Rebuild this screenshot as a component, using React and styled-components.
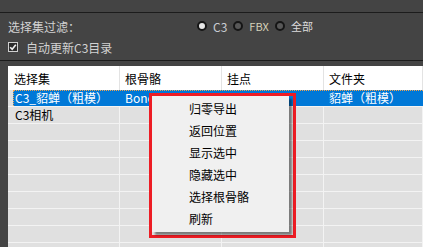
import React from "react";
import styled, { createGlobalStyle } from "styled-components";

const Global = createGlobalStyle`
  html, body { margin: 0; padding: 0; background: #444444; }
  body { font-family: "Noto Sans CJK SC", "Noto Sans", sans-serif; }
`;

const Frame = styled.div`
  position: relative;
  width: 423px;
  height: 247px;
  overflow: hidden;
  background: #444444;
`;

const TopStrip = styled.div`
  height: 12px;
  border-bottom: 1px solid #1c1c1c;
`;

const FilterPanel = styled.div`
  display: flex;
  flex-direction: column;
  gap: 3px;
  padding: 4px 0 4px 8px;
  border-bottom: 1px solid #1c1c1c;
  color: #d2d2d2;
  font-size: 12px;
`;

const Line = styled.div`
  display: flex;
  align-items: center;
  height: 18px;
`;

const FilterLabel = styled.span`
  width: 189px;
`;

const RadioGroup = styled.div`
  display: flex;
  align-items: center;
  gap: 6px;
`;

const Radio = styled.span`
  box-sizing: border-box;
  width: 10px;
  height: 10px;
  border-radius: 50%;
  border: 2px solid #151515;
  background: ${(p) => (p.$on ? "#e6e6e6" : "#585858")};
`;

const RadioText = styled.span`
  color: ${(p) => p.$tint || "#c9ccd2"};
  font-size: ${(p) => p.$size || "12px"};
`;

const CheckBox = styled.span`
  display: flex;
  width: 10px;
  height: 10px;
  margin-right: 8px;
`;

const Table = styled.div`
  margin: 5px 0 0 8px;
  font-size: 12px;
  color: #000;
`;

const Cols = styled.div`
  display: grid;
  grid-template-columns: 112px 102px 102px 1fr;
`;

const HeaderRow = styled(Cols)`
  height: 24px;
  background: #ffffff;
`;

const HeaderCell = styled.div`
  display: flex;
  align-items: center;
  padding-left: ${(p) => (p.$first ? "6px" : "5px")};
  border-right: 1px solid #e3e3e3;
`;

const Row = styled(Cols)`
  position: relative;
  height: 16px;
  border-bottom: 1px solid #f3f3f3;
  background: #e0e0e0;
  color: ${(p) => (p.$selected ? "#ffffff" : "#000")};

  ${(p) =>
    p.$selected &&
    `
    &::before {
      content: "";
      position: absolute;
      left: 5px;
      right: 0;
      top: 0;
      bottom: 0;
      background: #0078d7;
      border-top: 1px dotted #f0a450;
      border-left: 1px dotted #f0a450;
    }
  `}
`;

const Cell = styled.div`
  position: relative;
  white-space: nowrap;
  line-height: 16px;
  padding-left: ${(p) => (p.$first ? "7px" : "5px")};
  border-right: 1px solid ${(p) => (p.$selected ? "transparent" : "#f3f3f3")};
`;

const MenuFrame = styled.div`
  position: absolute;
  left: 149px;
  top: 93px;
  border: 3px solid #ed1c24;
  padding: 0 4px 3px 0;
`;

const Menu = styled.div`
  width: 137px;
  padding: 1px 0 3px;
  background: #f0f0f0;
  box-shadow: 3px 3px 2px rgba(0, 0, 0, 0.45);
`;

const MenuItem = styled.div`
  height: 22px;
  display: flex;
  align-items: center;
  padding-left: 37px;
  font-size: 12px;
  color: #000;
`;

const columns = ["选择集", "根骨骼", "挂点", "文件夹"];
const rows = [
  ["C3_貂蝉（粗模）", "Bone", "", "貂蝉（粗模）"],
  ["C3相机", "", "", ""],
  ...Array.from({ length: 8 }, () => ["", "", "", ""]),
];
const menuItems = ["归零导出", "返回位置", "显示选中", "隐藏选中", "选择根骨骼", "刷新"];

export default function App() {
  return (
    <Frame>
      <Global />
      <TopStrip />
      <FilterPanel>
        <Line>
          <FilterLabel>选择集过滤：</FilterLabel>
          <RadioGroup>
            <Radio $on />
            <RadioText>C3</RadioText>
            <Radio />
            <RadioText $tint="#d6d2b8" $size="11px">FBX</RadioText>
            <Radio />
            <RadioText $tint="#dcdcdc" $size="11px">全部</RadioText>
          </RadioGroup>
        </Line>
        <Line>
          <CheckBox>
            <svg width="10" height="10" viewBox="0 0 10 10">
              <rect x="0.5" y="0.5" width="9" height="9" fill="#2c2c2c" stroke="#cfcfcf" />
              <path d="M2.2 5.2 L4.2 7.2 L7.8 2.8" fill="none" stroke="#f2f2f2" strokeWidth="1.6" />
            </svg>
          </CheckBox>
          <span>自动更新C3目录</span>
        </Line>
      </FilterPanel>
      <Table>
        <HeaderRow>
          {columns.map((c, i) => (
            <HeaderCell key={c} $first={i === 0}>{c}</HeaderCell>
          ))}
        </HeaderRow>
        {rows.map((r, ri) => (
          <Row key={ri} $selected={ri === 0}>
            {r.map((v, ci) => (
              <Cell key={ci} $first={ci === 0} $selected={ri === 0}>{v}</Cell>
            ))}
          </Row>
        ))}
      </Table>
      <MenuFrame>
        <Menu>
          {menuItems.map((m) => (
            <MenuItem key={m}>{m}</MenuItem>
          ))}
        </Menu>
      </MenuFrame>
    </Frame>
  );
}
